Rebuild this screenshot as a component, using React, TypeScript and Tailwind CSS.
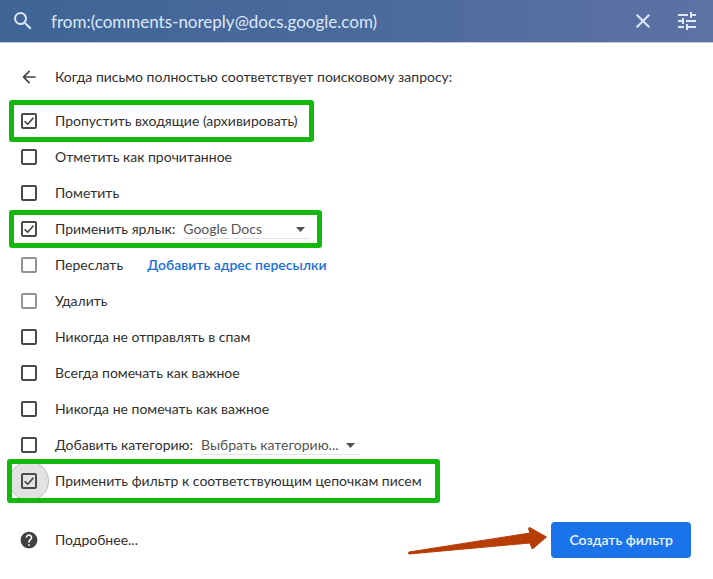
import React, { useState } from "react";

type BoxProps = { id: string; checked: boolean; muted?: boolean; ripple?: boolean; onToggle: () => void };

function Box({ id, checked, muted, ripple, onToggle }: BoxProps) {
  return (
    <span className="relative flex size-4 shrink-0 items-center justify-center">
      {ripple && <span className="absolute -inset-3 rounded-full border border-[#bdbdbd] bg-[#e2e2e2]" />}
      <input
        id={id}
        type="checkbox"
        checked={checked}
        onChange={onToggle}
        className={`relative m-0 size-4 appearance-none rounded-[2px] border-2 ${muted ? "border-[#939393]" : "border-[#4a4a4a]"}`}
      />
      {checked && (
        <svg className="pointer-events-none absolute inset-0 size-4" viewBox="0 0 16 16" fill="none" stroke="#3c3c3c" strokeWidth="1.6">
          <path d="M3.6 8.2 6.7 11.2 12.4 4.8" />
        </svg>
      )}
    </span>
  );
}

function Picker({ id, label, options, className }: { id: string; label: string; options: string[]; className: string }) {
  return (
    <span className={`relative ml-2 flex items-center ${className}`}>
      <select
        id={id}
        aria-label={label}
        className="h-5 w-full appearance-none border-b border-[#e2e2e2] bg-transparent pr-4 text-[#555]"
      >
        {options.map((o) => (
          <option key={o}>{o}</option>
        ))}
      </select>
      <svg className="pointer-events-none absolute right-1 h-[5px] w-[9px]" viewBox="0 0 9 5" fill="#505050">
        <path d="M0 0h9L4.5 5z" />
      </svg>
    </span>
  );
}

type Row = {
  id: string;
  text: string;
  checked?: boolean;
  muted?: boolean;
  ripple?: boolean;
  mark?: string;
  extra?: React.ReactNode;
};

const rows: Row[] = [
  { id: "archive", text: "Пропустить входящие (архивировать)", checked: true, mark: "-inset-y-[3px] left-[9px] w-[305px]" },
  { id: "read", text: "Отметить как прочитанное" },
  { id: "star", text: "Пометить" },
  {
    id: "label",
    text: "Применить ярлык:",
    checked: true,
    mark: "-inset-y-px left-[9px] w-[313px]",
    extra: <Picker id="label-name" label="Ярлык" options={["Google Docs"]} className="w-[126px]" />,
  },
  {
    id: "forward",
    text: "Переслать",
    muted: true,
    extra: (
      <a href="#forwarding" className="ml-6 font-semibold text-[#1a6fdc]">
        Добавить адрес пересылки
      </a>
    ),
  },
  { id: "delete", text: "Удалить", muted: true },
  { id: "nospam", text: "Никогда не отправлять в спам" },
  { id: "important", text: "Всегда помечать как важное" },
  { id: "unimportant", text: "Никогда не помечать как важное" },
  {
    id: "category",
    text: "Добавить категорию:",
    extra: <Picker id="category-name" label="Категория" options={["Выбрать категорию..."]} className="w-[158px]" />,
  },
  {
    id: "threads",
    text: "Применить фильтр к соответствующим цепочкам писем",
    checked: true,
    ripple: true,
    mark: "-inset-y-1 left-[7px] w-[433px]",
  },
];

export default function App() {
  const [on, setOn] = useState<Record<string, boolean>>(() => Object.fromEntries(rows.map((r) => [r.id, !!r.checked])));
  const [query, setQuery] = useState("from:(comments-noreply@docs.google.com)");

  return (
    <main className="min-h-screen overflow-hidden bg-white font-[Lato,'Liberation_Sans',sans-serif] text-sm text-[#303030]">
      <header className="flex h-[43px] items-center border-b border-[#c3c8dc] bg-linear-to-r from-[#3f6496] via-[#4a6a9c] to-[#5e72a4] pr-3.5 pl-[11px] text-[#dce8fa]">
        <button type="button" aria-label="Поиск" className="flex size-6 items-center justify-center">
          <svg className="size-6" viewBox="0 0 24 24" fill="currentColor">
            <path d="M15.5 14h-.79l-.28-.27A6.47 6.47 0 0 0 16 9.5 6.5 6.5 0 1 0 9.5 16c1.61 0 3.09-.59 4.23-1.57l.27.28v.79l5 4.99L20.49 19l-4.99-5zm-6 0C7.01 14 5 11.99 5 9.5S7.01 5 9.5 5 14 7.01 14 9.5 11.99 14 9.5 14z" />
          </svg>
        </button>
        <input
          type="text"
          aria-label="Поисковый запрос"
          value={query}
          onChange={(e) => setQuery(e.target.value)}
          className="ml-4 h-8 min-w-0 flex-1 bg-transparent text-[17px] outline-none"
        />
        <button type="button" aria-label="Очистить" className="flex size-6 items-center justify-center">
          <svg className="size-6" viewBox="0 0 24 24" fill="currentColor">
            <path d="M19 6.41 17.59 5 12 10.59 6.41 5 5 6.41 10.59 12 5 17.59 6.41 19 12 13.41 17.59 19 19 17.59 13.41 12z" />
          </svg>
        </button>
        <button type="button" aria-label="Параметры поиска" className="ml-5 flex size-6 items-center justify-center">
          <svg className="size-6" viewBox="0 0 24 24" fill="currentColor">
            <path d="M3 17v2h6v-2H3zM3 5v2h10V5H3zm10 16v-2h8v-2h-8v-2h-2v6h2zM7 9v2H3v2h4v2h2V9H7zm14 4v-2H11v2h10zm-6-4h2V7h4V5h-4V3h-2v6z" />
          </svg>
        </button>
      </header>

      <form className="pt-4" onSubmit={(e) => e.preventDefault()}>
        <div className="mb-2 flex h-9 items-center pl-[19px]">
          <button type="button" aria-label="Назад" className="flex size-5 items-center justify-center">
            <svg className="size-5" viewBox="0 0 24 24" fill="#444">
              <path d="M20 11H7.83l5.59-5.59L12 4l-8 8 8 8 1.41-1.41L7.83 13H20v-2z" />
            </svg>
          </button>
          <h1 className="ml-4">Когда письмо полностью соответствует поисковому запросу:</h1>
        </div>

        {rows.map((r) => (
          <div key={r.id} className="relative flex h-9 items-center pl-[21px]">
            <Box
              id={r.id}
              checked={on[r.id]}
              muted={r.muted}
              ripple={r.ripple}
              onToggle={() => setOn((s) => ({ ...s, [r.id]: !s[r.id] }))}
            />
            <label htmlFor={r.id} className="ml-[18px] whitespace-nowrap">
              {r.text}
            </label>
            {r.extra}
            {r.mark && <span className={`pointer-events-none absolute rounded-[3px] border-5 border-[#12b80c] ${r.mark}`} />}
          </div>
        ))}

        <footer className="flex items-center pt-[23px] pr-[22px] pl-[19px]">
          <svg className="size-5 shrink-0" viewBox="0 0 24 24" fill="#404040">
            <path d="M12 2C6.48 2 2 6.48 2 12s4.48 10 10 10 10-4.48 10-10S17.52 2 12 2zm1 17h-2v-2h2v2zm2.07-7.75-.9.92C13.45 12.9 13 13.5 13 15h-2v-.5c0-1.1.45-2.1 1.17-2.83l1.24-1.26c.37-.36.59-.86.59-1.41 0-1.1-.9-2-2-2s-2 .9-2 2H8c0-2.21 1.79-4 4-4s4 1.79 4 4c0 .88-.36 1.68-.93 2.25z" />
          </svg>
          <a href="#help" className="ml-4">
            Подробнее...
          </a>
          <svg
            className="mr-[3px] ml-auto h-8 w-[141px]"
            viewBox="0 0 141 32"
            fill="#b83c05"
            stroke="#b83c05"
            strokeLinejoin="round"
          >
            <path d="M2 28 123 9 121.5 4.5Q121.5 3 123.5 4L139.5 13 126 24.5Q124.5 25 124.500 23.500L123 19 2 30Q1 29 2 28z" />
          </svg>
          <button type="submit" className="h-9 rounded bg-[#1a73e8] px-[18px] font-semibold text-[#eef5ff]">
            Создать фильтр
          </button>
        </footer>
      </form>
    </main>
  );
}
